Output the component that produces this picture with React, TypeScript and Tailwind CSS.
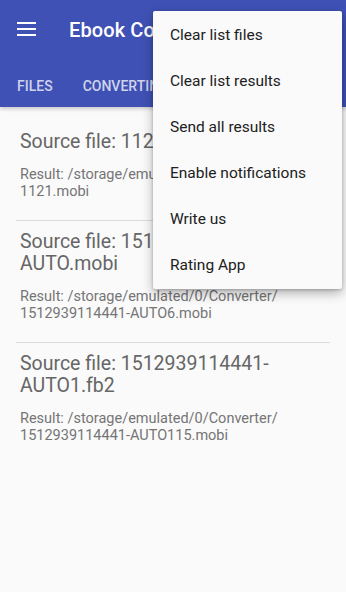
import React from 'react';

const menuItems = [
  'Clear list files',
  'Clear list results',
  'Send all results',
  'Enable notifications',
  'Write us',
  'Rating App',
];

const results = [
  {
    source: ['Source file: 1121.fb2'],
    result: ['Result: /storage/emulated/0/Converter/', '1121.mobi'],
  },
  {
    source: ['Source file: 1512939114441-', 'AUTO.mobi'],
    result: ['Result: /storage/emulated/0/Converter/', '1512939114441-AUTO6.mobi'],
  },
  {
    source: ['Source file: 1512939114441-', 'AUTO1.fb2'],
    result: ['Result: /storage/emulated/0/Converter/', '1512939114441-AUTO115.mobi'],
  },
];

export default function App() {
  return (
    <div
      className="relative w-[346px] h-[592px] overflow-hidden bg-[#fafafa]"
      style={{ fontFamily: 'Roboto, "Noto Sans", sans-serif' }}
    >
      {/* app bar */}
      <div className="bg-[#3f51b5] h-[107px] flex flex-col shadow-[0_2px_4px_rgba(0,0,0,0.2)]">
        <div className="h-[60px] flex items-center pl-[17px]">
          <svg width="19" height="14" viewBox="0 0 19 14" className="mt-[-2px]">
            <rect x="0" y="0" width="19" height="2" fill="#fff" />
            <rect x="0" y="6" width="19" height="2" fill="#fff" />
            <rect x="0" y="12" width="19" height="2" fill="#fff" />
          </svg>
          <span className="ml-[33px] text-white text-[20px] font-medium tracking-[0.1px]">Ebook Converter</span>
        </div>
        <div className="flex-1 flex items-start pt-[16px] pl-[17px] gap-[30px] text-[14px] font-medium text-white/75">
          <span>FILES</span>
          <span>CONVERTING</span>
          <span>RESULTS</span>
        </div>
      </div>

      {/* list */}
      <div className="pt-[14px] px-[16px]">
        {results.map((r, i) => (
          <div
            key={i}
            className={`pt-[10px] pb-[20px] px-[4px] ${i < results.length - 1 ? 'border-b border-[#dcdcdc]' : ''}`}
          >
            <div className="text-[19.5px] leading-[22px] text-[#666666]">
              {r.source.map((l, j) => (
                <div key={j}>{l}</div>
              ))}
            </div>
            <div className="mt-[14px] text-[14.5px] leading-[16.5px] text-[#757575]">
              {r.result.map((l, j) => (
                <div key={j}>{l}</div>
              ))}
            </div>
          </div>
        ))}
      </div>

      {/* overflow menu */}
      <div className="absolute left-[153px] top-[11px] w-[189px] bg-[#fafafa] rounded-[2px] pt-[2px] shadow-[0_4px_12px_rgba(0,0,0,0.3),0_1px_3px_rgba(0,0,0,0.2)]">
        {menuItems.map((m) => (
          <div key={m} className="h-[46px] flex items-center pl-[17px] text-[15.5px] text-[#212121]">
            {m}
          </div>
        ))}
      </div>
    </div>
  );
}
